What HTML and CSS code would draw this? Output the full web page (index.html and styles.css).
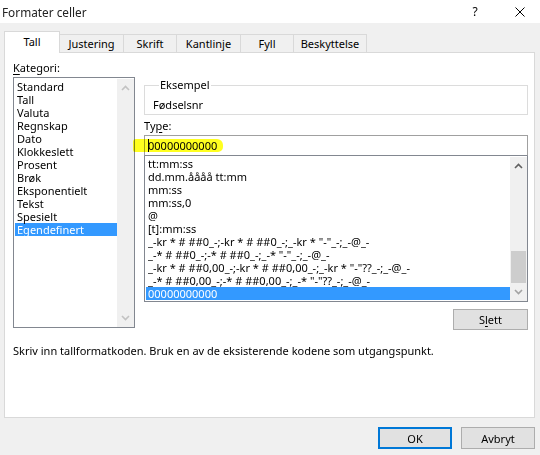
FILE: index.html
```html
<!DOCTYPE html>
<html lang="no">
<head>
  <meta charset="UTF-8" />
  <title>Formater celler</title>
  <link rel="stylesheet" href="styles.css">
</head>
<body>

<div class="titlebar">
  <span class="title">Formater celler</span>
  <span class="help">?</span>
  <svg class="close" width="10" height="10" viewBox="0 0 10 10"><path d="M0.5 0.5 L9.5 9.5 M9.5 0.5 L0.5 9.5" stroke="#000" stroke-width="1"/></svg>
</div>

<div class="tabs">
  <div class="tab active" style="width:56px">Tall</div>
  <div class="tab" style="width:64px">Justering</div>
  <div class="tab" style="width:53px">Skrift</div>
  <div class="tab" style="width:64px">Kantlinje</div>
  <div class="tab" style="width:53px">Fyll</div>
  <div class="tab" style="width:73px">Beskyttelse</div>
</div>

<div class="panel">
  <div class="columns">
    <div class="left">
      <div class="label"><u>K</u>ategori:</div>
      <div class="listbox cat">
        <ul class="rows">
          <li>Standard</li>
          <li>Tall</li>
          <li>Valuta</li>
          <li>Regnskap</li>
          <li>Dato</li>
          <li>Klokkeslett</li>
          <li>Prosent</li>
          <li>Brøk</li>
          <li>Eksponentielt</li>
          <li>Tekst</li>
          <li>Spesielt</li>
          <li class="sel">Egendefinert</li>
        </ul>
        <div class="vscroll">
          <svg class="arrow off" width="9" height="6" viewBox="0 0 9 6"><path d="M1 5 L4.5 1.5 L8 5" fill="none" stroke-width="1.6"/></svg>
          <div class="track"></div>
          <svg class="arrow off" width="9" height="6" viewBox="0 0 9 6"><path d="M1 1 L4.5 4.5 L8 1" fill="none" stroke-width="1.6"/></svg>
        </div>
      </div>
    </div>

    <div class="right">
      <fieldset class="sample">
        <legend>Eksempel</legend>
        <div class="sample-text">Fødselsnr</div>
      </fieldset>

      <div class="label type-label">Ty<u>p</u>e:</div>
      <div class="typebox">
        <span class="caret"></span>00000000000
        <span class="marker"></span>
      </div>

      <div class="listbox codes">
        <ul class="rows">
          <li>tt:mm:ss</li>
          <li>dd.mm.åååå tt:mm</li>
          <li>mm:ss</li>
          <li>mm:ss,0</li>
          <li>@</li>
          <li>[t]:mm:ss</li>
          <li>_-kr * # ##0_-;-kr * # ##0_-;_-kr * "-"_-;_-@_-</li>
          <li>_-* # ##0_-;-* # ##0_-;_-* "-"_-;_-@_-</li>
          <li>_-kr * # ##0,00_-;-kr * # ##0,00_-;_-kr * "-"??_-;_-@_-</li>
          <li>_-* # ##0,00_-;-* # ##0,00_-;_-* "-"??_-;_-@_-</li>
          <li class="sel">00000000000</li>
        </ul>
        <div class="vscroll">
          <svg class="arrow" width="9" height="6" viewBox="0 0 9 6"><path d="M1 5 L4.5 1.5 L8 5" fill="none" stroke-width="1.6"/></svg>
          <div class="track"><div class="thumb"></div></div>
          <svg class="arrow dim" width="9" height="6" viewBox="0 0 9 6"><path d="M1 1 L4.5 4.5 L8 1" fill="none" stroke-width="1.6"/></svg>
        </div>
      </div>

      <div class="btnrow">
        <button class="btn slett">S<u>l</u>ett</button>
      </div>
    </div>
  </div>

  <p class="hint">Skriv inn tallformatkoden. Bruk en av de eksisterende kodene som utgangspunkt.</p>
</div>

<div class="footer">
  <button class="btn default">OK</button>
  <button class="btn">Avbryt</button>
</div>

</body>
</html>
```

FILE: styles.css
```css
body { margin: 0; width: 540px; height: 455px; overflow: hidden; background: #f0f0f0; font-family: "Noto Sans", "Open Sans", sans-serif; font-size: 11px; color: #000; }
u { text-decoration: underline; text-underline-offset: 2px; }

/* title bar */
.titlebar { height: 23px; background: #fff; display: flex; align-items: center; }
.title { padding-left: 2px; flex: 1; font-size: 11.8px; color: #222; }
.help { width: 10px; text-align: center; margin-right: 35px; font-size: 12px; }
.close { margin-right: 15px; }

/* tabs */
.tabs { display: flex; align-items: flex-end; height: 21px; margin: 8px 0 0 4px; position: relative; z-index: 1; }
.tab { box-sizing: border-box; height: 18px; border-top: 1px solid #d9d9d9; border-right: 1px solid #d9d9d9; text-align: center; line-height: 18px; background: #f0f0f0; }
.tab.active { height: 22px; margin-bottom: -1px; background: #fff; border-left: 1px solid #d9d9d9; line-height: 20px; }

/* page panel */
.panel { box-sizing: border-box; width: 531px; height: 366px; margin-left: 4px; background: #fff; border: 1px solid #d9d9d9; padding: 7px 0 0 8px; }
.columns { display: flex; }
.label { line-height: 16px; height: 16px; }
.left { width: 122px; }
.right { width: 384px; margin-left: 9px; padding-top: 17px; }

.listbox { box-sizing: border-box; display: flex; border: 1px solid #828790; background: #fff; padding: 1px 0 0 1px; }
.listbox .rows { list-style: none; margin: 0; padding: 0; flex: 1; overflow: hidden; }
.listbox li { height: 13px; line-height: 13px; padding-left: 2px; white-space: nowrap; }
.listbox li.sel { background: #3399ff; color: #fff; }
.cat { height: 251px; margin-top: 1px; padding-top: 2px; }
.cat .vscroll { margin-top: -1px; }
.codes { height: 147px; margin-top: -1px; }

.vscroll { width: 17px; background: #f0f0f0; display: flex; flex-direction: column; align-items: center; }
.vscroll .arrow { flex: none; margin: 6px 0; stroke: #606060; }
.vscroll .arrow.off { stroke: #c2c2c2; }
.vscroll .arrow.dim { stroke: #a3a3a3; }
.vscroll .track { flex: 1; width: 100%; display: flex; flex-direction: column; justify-content: flex-end; }
.thumb { height: 32px; margin: 0 1px 0 1px; background: #cdcdcd; }

.sample { margin: 0; padding: 4px 8px 1px; border: 1px solid #dcdcdc; min-width: 0; }
.sample legend { padding: 0 1px; margin-left: 6px; line-height: 16px; }
.sample-text { line-height: 16px; }
.type-label { margin-top: 3px; margin-bottom: 1px; }

.typebox { box-sizing: border-box; height: 21px; border: 1px solid #a0a0a0; border-bottom-color: #828790; padding-left: 3px; line-height: 19px; position: relative; }
.caret { display: inline-block; width: 1px; height: 13px; background: #000; vertical-align: -2px; margin-right: -1px; }
.marker { position: absolute; left: -12px; top: 3px; width: 90px; height: 13px; background: #ffff20; border-radius: 3px 6px 5px 2px; mix-blend-mode: multiply; }

.btnrow { display: flex; justify-content: flex-end; margin-top: 7px; }
.btn { box-sizing: border-box; font: inherit; font-size: 11px; color: #000; background: #e1e1e1; border: 1px solid #adadad; padding: 0; }
.slett { width: 75px; height: 21px; }

.hint { margin: 13px 0 0; line-height: 16px; }

/* dialog buttons */
.footer { display: flex; justify-content: flex-end; gap: 9px; width: 531px; margin: 9px 0 0 4px; }
.footer .btn { width: 74px; height: 22px; }
.footer .default { border: 2px solid #0078d7; }
```
